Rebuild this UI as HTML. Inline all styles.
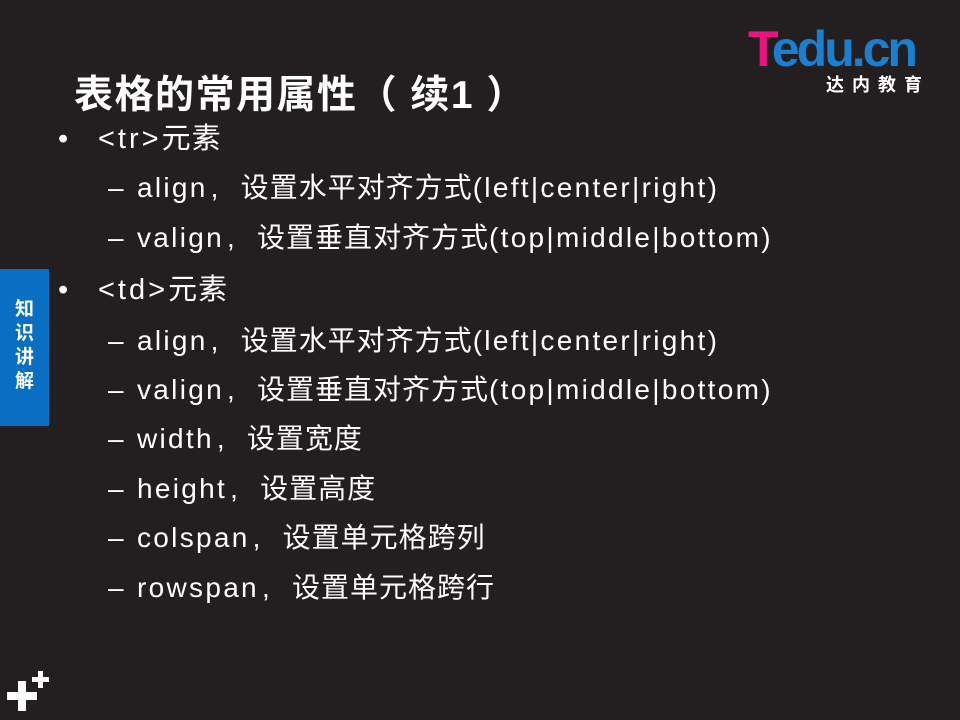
<!DOCTYPE html>
<html><head><meta charset="utf-8"><style>
html,body{margin:0;padding:0}
body{width:960px;height:720px;background:#231f20;position:relative;overflow:hidden;font-family:"Liberation Sans","Noto Sans CJK SC",sans-serif;color:#fff}
.t{position:absolute;white-space:nowrap;line-height:1}
.title{left:74px;top:76px;font-size:39px;font-weight:bold;letter-spacing:1.5px}
.b{font-size:29px;letter-spacing:1px}
.b i{font-style:normal;letter-spacing:3px}
.s{font-size:28px;letter-spacing:1px}
.s i{font-style:normal;letter-spacing:2.3px}
.c{display:inline-block;width:30px;text-align:left;padding-left:3px}
.tab{position:absolute;left:0;top:269px;width:49px;height:157px;background:#0a6fc2}
.tab div{position:absolute;left:0;width:49px;text-align:center;font-size:19px;font-weight:bold;line-height:1}
</style></head><body>
<div class="t" style="left:748px;top:24px;font-size:50px;font-weight:bold;letter-spacing:-3px"><span style="color:#e8157f">T</span><span style="color:#1a7fd0">edu.cn</span></div>
<div class="t" style="left:826px;top:76px;font-size:18px;letter-spacing:8px;font-weight:bold">达内教育</div>
<div class="t title">表格的常用属性（ 续1 ）</div>
<div class="t b" style="left:58px;top:125px">•</div><div class="t b" style="left:98px;top:125px"><i>&lt;tr&gt;</i>元素</div>
<div class="t s" style="left:108px;top:174px">–</div><div class="t s" style="left:137px;top:174px"><i>align</i><span class="c">,</span>设置水平对齐方式<i>(left|center|right)</i></div>
<div class="t s" style="left:108px;top:224px">–</div><div class="t s" style="left:137px;top:224px"><i>valign</i><span class="c">,</span>设置垂直对齐方式<i>(top|middle|bottom)</i></div>
<div class="t b" style="left:58px;top:276px">•</div><div class="t b" style="left:98px;top:276px"><i>&lt;td&gt;</i>元素</div>
<div class="t s" style="left:108px;top:327px">–</div><div class="t s" style="left:137px;top:327px"><i>align</i><span class="c">,</span>设置水平对齐方式<i>(left|center|right)</i></div>
<div class="t s" style="left:108px;top:376px">–</div><div class="t s" style="left:137px;top:376px"><i>valign</i><span class="c">,</span>设置垂直对齐方式<i>(top|middle|bottom)</i></div>
<div class="t s" style="left:108px;top:425px">–</div><div class="t s" style="left:137px;top:425px"><i>width</i><span class="c">,</span>设置宽度</div>
<div class="t s" style="left:108px;top:475px">–</div><div class="t s" style="left:137px;top:475px"><i>height</i><span class="c">,</span>设置高度</div>
<div class="t s" style="left:108px;top:524px">–</div><div class="t s" style="left:137px;top:524px"><i>colspan</i><span class="c">,</span>设置单元格跨列</div>
<div class="t s" style="left:108px;top:574px">–</div><div class="t s" style="left:137px;top:574px"><i>rowspan</i><span class="c">,</span>设置单元格跨行</div>
<div class="tab"><div style="top:31px">知</div><div style="top:55px">识</div><div style="top:79px">讲</div><div style="top:103px">解</div></div>
<svg style="position:absolute;left:0;top:660px" width="60" height="60">
<rect x="7" y="32" width="30" height="8" fill="#fff"/><rect x="18" y="21" width="8" height="30" fill="#fff"/>
<rect x="32" y="17" width="17" height="5" fill="#fff"/><rect x="38" y="11" width="5" height="17" fill="#fff"/>
</svg>
</body></html>
